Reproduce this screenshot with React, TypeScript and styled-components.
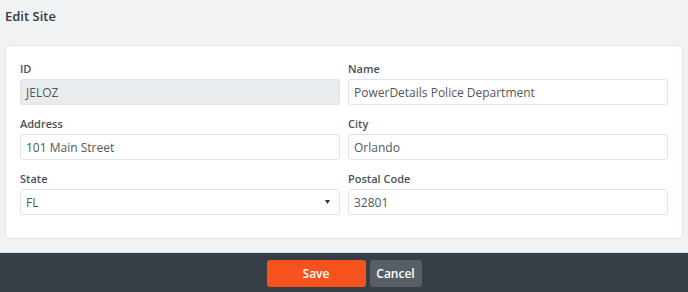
import React from "react";
import styled, { createGlobalStyle } from "styled-components";

const Global = createGlobalStyle`
  html, body { margin: 0; padding: 0; }
  body {
    background: #f0f2f4;
    font-family: "Open Sans", "Liberation Sans", sans-serif;
    width: 688px;
    height: 292px;
    overflow: hidden;
  }
`;

const Page = styled.div`
  display: flex;
  flex-direction: column;
  height: 292px;
`;

const Title = styled.h1`
  margin: 0;
  padding: 5px 5px 0 5px;
  height: 45px;
  box-sizing: border-box;
  font-size: 13px;
  font-weight: 600;
  line-height: 22px;
  color: #333a40;
`;

const Card = styled.div`
  margin: 0 5px;
  background: #fff;
  border: 1px solid #e1e5e9;
  border-radius: 5px;
  padding: 15px 14px 23px 14px;
  display: grid;
  grid-template-columns: 1fr 1fr;
  column-gap: 8px;
  row-gap: 11px;
`;

const Field = styled.div`
  display: flex;
  flex-direction: column;
`;

const Label = styled.label`
  font-size: 11px;
  font-weight: 600;
  line-height: 16px;
  color: #4a5156;
  margin-bottom: 2px;
`;

const Input = styled.div<{ $disabled?: boolean }>`
  box-sizing: border-box;
  height: 26px;
  border: 1px solid #dfe3e7;
  border-radius: 3px;
  background: ${(p) => (p.$disabled ? "#e9ecef" : "#fff")};
  padding: 0 6px 0 5px;
  display: flex;
  align-items: center;
  justify-content: space-between;
  font-size: 12px;
  color: #4f575d;
`;

const Arrow = styled.svg`
  width: 5px;
  height: 4px;
  margin-right: 3px;
`;

const Spacer = styled.div`
  height: 13px;
  border-bottom: 1px solid #dcdfe2;
`;

const Footer = styled.div`
  flex: 1;
  background: #363f45;
  display: flex;
  justify-content: center;
  align-items: flex-start;
  gap: 4px;
  padding-top: 7px;
`;

const Button = styled.button<{ $primary?: boolean }>`
  height: 27px;
  width: ${(p) => (p.$primary ? "99px" : "52px")};
  border: none;
  border-radius: 3px;
  background: ${(p) => (p.$primary ? "#f5521e" : "#575f65")};
  color: #fff;
  font-family: "Open Sans", "Liberation Sans", sans-serif;
  font-size: 12px;
  font-weight: 600;
  padding: 0;
`;

export default function App() {
  return (
    <Page>
      <Global />
      <Title>Edit Site</Title>
      <Card>
        <Field>
          <Label>ID</Label>
          <Input $disabled>JELOZ</Input>
        </Field>
        <Field>
          <Label>Name</Label>
          <Input>PowerDetails Police Department</Input>
        </Field>
        <Field>
          <Label>Address</Label>
          <Input>101 Main Street</Input>
        </Field>
        <Field>
          <Label>City</Label>
          <Input>Orlando</Input>
        </Field>
        <Field>
          <Label>State</Label>
          <Input>
            FL
            <Arrow viewBox="0 0 5 4">
              <path d="M0 0 L5 0 L2.5 4 Z" fill="#333" />
            </Arrow>
          </Input>
        </Field>
        <Field>
          <Label>Postal Code</Label>
          <Input>32801</Input>
        </Field>
      </Card>
      <Spacer />
      <Footer>
        <Button $primary>Save</Button>
        <Button>Cancel</Button>
      </Footer>
    </Page>
  );
}
